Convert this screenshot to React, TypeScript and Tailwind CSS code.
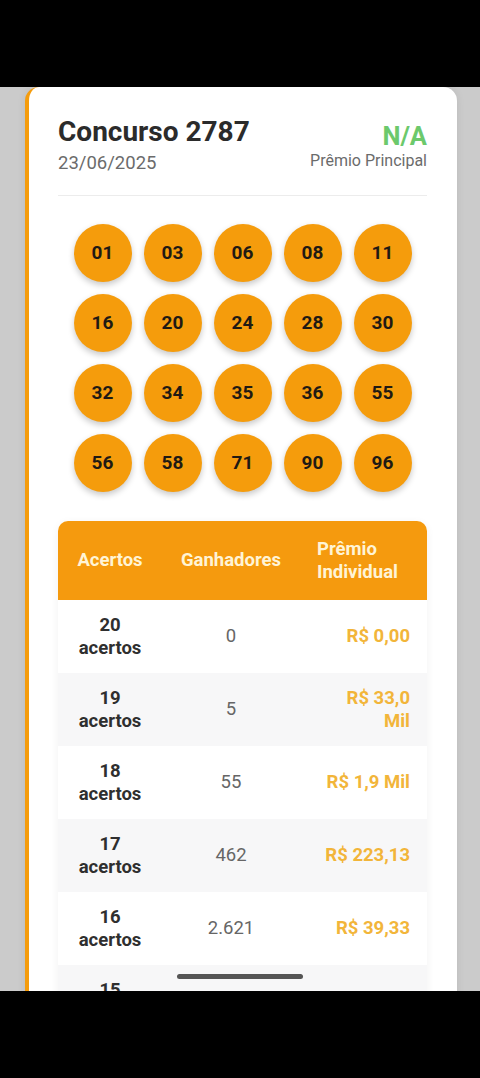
const numbers = ["01", "03", "06", "08", "11", "16", "20", "24", "28", "30", "32", "34", "35", "36", "55", "56", "58", "71", "90", "96"];

type Row = {
  hits: number;
  winners: string;
  prize: string;
};

const rows: Row[] = [
  { hits: 20, winners: "0", prize: "R$ 0,00" },
  { hits: 19, winners: "5", prize: "R$ 33,0 Mil" },
  { hits: 18, winners: "55", prize: "R$ 1,9 Mil" },
  { hits: 17, winners: "462", prize: "R$ 223,13" },
  { hits: 16, winners: "2.621", prize: "R$ 39,33" },
  { hits: 15, winners: "15.032", prize: "R$ 6,85" },
];

const Ball = ({ value }: { value: string }) => (
  <div className="flex h-[58px] w-[58px] items-center justify-center rounded-full bg-[#f59c0c] text-[19px] font-bold text-[#1f1a14] shadow-[0_3px_6px_rgba(0,0,0,0.22)]">
    {value}
  </div>
);

const App = () => {
  return (
    <div className="flex h-[1078px] flex-col bg-black font-['Roboto',sans-serif]">
      <div className="h-[87px] shrink-0" />
      <div className="relative h-[904px] shrink-0 overflow-hidden bg-[#cbcbcb] pl-[25px] pr-[23px]">
        <div className="min-h-full rounded-t-[14px] border-l-4 border-[#f59c0c] bg-white pl-[29px] pr-[30px] pt-[29px] shadow-[0_0_8px_rgba(0,0,0,0.08)]">
          <div className="flex items-start justify-between">
            <div>
              <h1 className="text-[28px] font-bold leading-[32px] text-[#2b2b2b]">Concurso 2787</h1>
              <p className="mt-[4px] text-[18.5px] leading-[22px] text-[#6b6b6b]">23/06/2025</p>
            </div>
            <div className="pt-[6px] text-right">
              <div className="text-[25.5px] font-bold leading-[28px] text-[#6cc96c]">N/A</div>
              <div className="mt-[2px] text-[16px] leading-[18px] text-[#6b6b6b]">Prêmio Principal</div>
            </div>
          </div>
          <div className="mt-[21px] h-px bg-[#ececec]" />

          <div className="mt-[28px] grid grid-cols-[repeat(5,58px)] justify-center gap-[12px]">
            {numbers.map((n) => (
              <Ball key={n} value={n} />
            ))}
          </div>

          <div className="mt-[29px] overflow-hidden rounded-t-[10px] shadow-[0_2px_8px_rgba(0,0,0,0.06)]">
            <div className="grid h-[79px] grid-cols-[104px_138px_1fr] items-center bg-[#f59a0e] text-[18.5px] font-bold leading-[23px] text-[#fff4d6]">
              <div className="text-center">Acertos</div>
              <div className="text-center">Ganhadores</div>
              <div className="pl-[17px] pr-[8px]">Prêmio Individual</div>
            </div>
            {rows.map((r, i) => (
              <div
                key={r.hits}
                className={`grid h-[73px] grid-cols-[104px_138px_1fr] items-center text-[18.5px] leading-[23px] ${i % 2 === 1 ? "bg-[#f7f7f8]" : "bg-white"}`}
              >
                <div className="text-center font-bold text-[#2f2f2f]">
                  {r.hits}
                  <br />
                  acertos
                </div>
                <div className="text-center text-[#666666]">{r.winners}</div>
                <div className="pl-[17px] pr-[17px] text-right font-bold text-[#f2b53a]">{r.prize}</div>
              </div>
            ))}
          </div>
        </div>
        <div className="absolute bottom-[12px] left-[177px] h-[5px] w-[126px] rounded-full bg-[#555555]" />
      </div>
    </div>
  );
};

export default App;
